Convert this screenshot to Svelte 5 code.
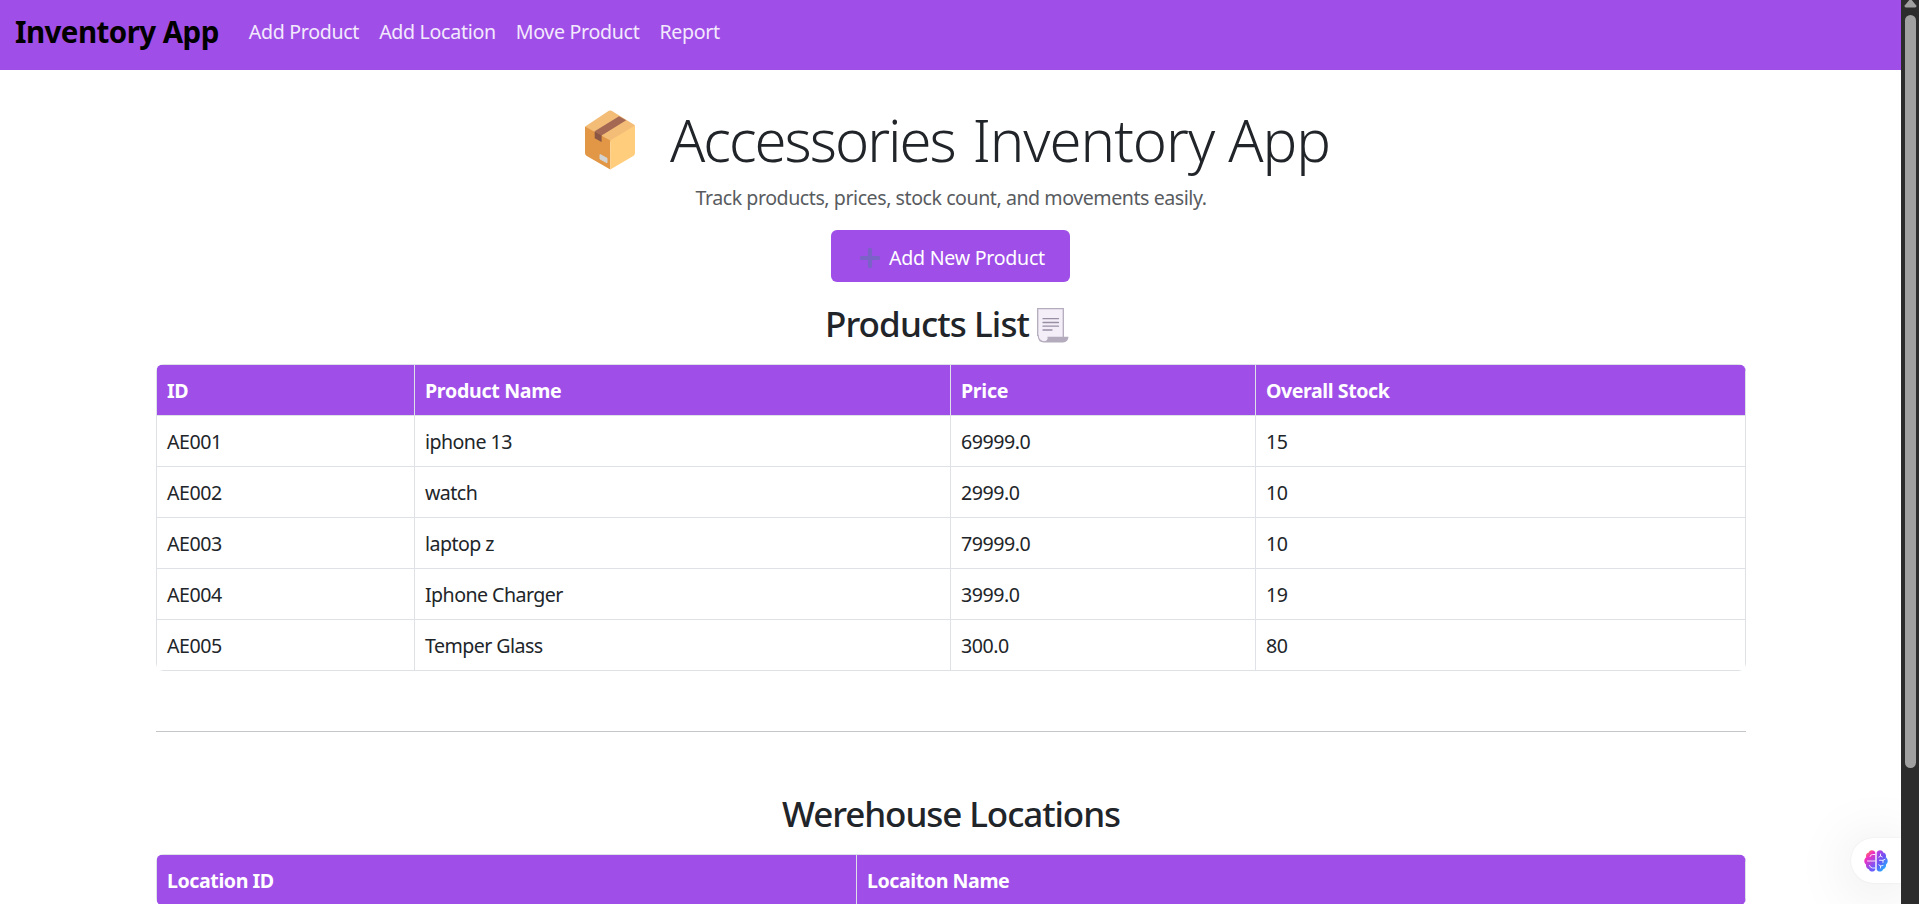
<script>
  const links = ['Add Product', 'Add Location', 'Move Product', 'Report'];
  const products = [
    { id: 'AE001', name: 'iphone 13', price: '69999.0', stock: 15 },
    { id: 'AE002', name: 'watch', price: '2999.0', stock: 10 },
    { id: 'AE003', name: 'laptop z', price: '79999.0', stock: 10 },
    { id: 'AE004', name: 'Iphone Charger', price: '3999.0', stock: 19 },
    { id: 'AE005', name: 'Temper Glass', price: '300.0', stock: 80 }
  ];
</script>

<div class="window">
  <div class="page">
    <nav>
      <span class="brand">Inventory App</span>
      {#each links as link}
        <span class="link">{link}</span>
      {/each}
    </nav>

    <main>
      <h1>
        <svg class="box" viewBox="0 0 50 60" width="50" height="60" aria-hidden="true">
          <path d="M0.6 16.2 23.8 .8Q25.2 0 26.6 .8L49.6 15 50 17.5 25.3 32 0 17.5Z" fill="#f3bd78" />
          <path d="M0 16.5 25.3 30.5V59.5L1.8 46Q0 45 0 43Z" fill="#e29746" />
          <path d="M25.3 30.5 50 15.5V43Q50 45 48.3 46L25.3 59.5Z" fill="#ffcd7c" />
          <path d="M9.7 21.2 34 6.2 41.2 10.3 16.6 25.6Z" fill="#a56953" />
          <path d="M9.7 21.2 16.6 25.2V32L9.7 28.2Z" fill="#8b5644" />
          <path d="M15 44.500 22 48.300V52.800L15 49Z" fill="#d3d3d3" stroke="#d3d3d3" stroke-linejoin="round" />
        </svg>
        <span class="w1">Accessories</span>
        <span class="w2">Inventory App</span>
      </h1>
      <p class="lead">Track products, prices, stock count, and movements easily.</p>
      <button>
        <svg viewBox="0 0 20 20" width="20" height="20" aria-hidden="true">
          <path d="M10 2V18M2 10H18" stroke="#7b62c6" stroke-width="4.2" stroke-linecap="round" />
        </svg>
        <span>Add New Product</span>
      </button>

      <h2 class="first">
        <span class="products">Products List</span>
        <svg viewBox="0 0 32 35" width="32" height="35" aria-hidden="true">
          <path d="M.7.7H26.3V30H10V34.3H6Q.7 33.5 .7 28Z" fill="#f3eef8" />
          <path d="M.7 28V.7H26.3V29" fill="none" stroke="#b4acbc" stroke-width="1.3" />
          <path d="M.6 27Q.8 34.5 7 34.5H26Q31.3 34 31.5 28.8H10.5Q11 33 7.5 33.2 2 33 1.6 27Z" fill="#b4acbc" />
          <path d="M6 10.7H21.5M6 14.5H21.5M6 18.2H21.5M6 22H15" stroke="#998ea4" stroke-width="1.3" stroke-linecap="round" />
        </svg>
      </h2>

      <div class="frame">
        <table>
          <colgroup><col class="c1" /><col class="c2" /><col class="c3" /><col class="c4" /></colgroup>
          <thead>
            <tr><th>ID</th><th>Product Name</th><th>Price</th><th class="tight">Overall Stock</th></tr>
          </thead>
          <tbody>
            {#each products as p}
              <tr><td>{p.id}</td><td class="name">{p.name}</td><td>{p.price}</td><td>{p.stock}</td></tr>
            {/each}
          </tbody>
        </table>
      </div>

      <hr />

      <h2 class="second"><span class="places">Werehouse Locations</span></h2>
      <div class="frame">
        <table>
          <colgroup><col class="l1" /><col class="l2" /></colgroup>
          <thead>
            <tr><th class="tight">Location ID</th><th class="tight">Locaiton Name</th></tr>
          </thead>
        </table>
      </div>
    </main>

    <div class="assistant">
      <svg viewBox="0 0 24 22" width="24" height="22" aria-hidden="true">
        <defs>
          <linearGradient id="left" x1="0" y1="0" x2=".5" y2="1">
            <stop offset="0" stop-color="#ffa51f" /><stop offset=".4" stop-color="#f22fc0" /><stop offset="1" stop-color="#6b5cff" />
          </linearGradient>
          <linearGradient id="right" x1="0" y1="0" x2=".6" y2="1">
            <stop offset="0" stop-color="#c53be0" /><stop offset=".55" stop-color="#6457f5" /><stop offset="1" stop-color="#22b5ff" />
          </linearGradient>
        </defs>
        <path d="M11.3 2.5C10-.6 5.500-.3 4.800 2.500 2.200 3 1.600 5.300 2.200 7.300-.3 9-.3 12.800 2 14.500 1.600 17 3 18.800 4.800 19.200 5.800 22.300 10.300 22.400 11.300 19.500Z" fill="url(#left)" />
        <path d="M12.7 2.5C14-.6 18.500-.3 19.200 2.500 21.800 3 22.400 5.300 21.800 7.300 24.300 9 24.300 12.800 22 14.500 22.400 17 21 18.800 19.200 19.200 18.200 22.300 13.700 22.400 12.700 19.500Z" fill="url(#right)" />
        <path d="M11 4.500H8.500Q6.500 4.500 6 6.500M3.500 11H11M5.500 15.500Q6.500 18 8.500 18H11M16.500 4V6L14.800 7.200M16.500 6L18.200 7M15.500 10.300H19L21 9.300M19 10.300V12.500M14.800 14.800L16.500 16L19 15.500M16.500 16V18" fill="none" stroke="#fff" stroke-opacity=".85" stroke-width="1" stroke-linecap="round" />
      </svg>
    </div>
  </div>

  <div class="scrollbar">
    <svg viewBox="0 0 13 8" width="13" height="8" aria-hidden="true"><path d="M5.300 0H7.700L12.300 5.500Q13 7.500 11 7.500H2Q0 7.500.7 5.500Z" fill="#a0a0a0" /></svg>
    <div class="thumb"></div>
  </div>
</div>

<style>
  :global(body) { margin: 0; overflow: hidden; }
  .window {
    display: flex;
    height: 904px;
    overflow: hidden;
    background: #fff;
    color: #212529;
    font: 400 19.6px/30px "Noto Sans", "Open Sans", sans-serif;
    letter-spacing: -0.45px;
  }
  .page { position: relative; flex: 1; height: 904px; overflow: hidden; }
  nav {
    display: flex;
    align-items: center;
    gap: 20px;
    box-sizing: border-box;
    height: 70px;
    padding: 0 15px 7px;
    background: #a04ee8;
  }
  .brand { margin-right: 10px; color: #000; font-size: 29.5px; font-weight: 700; letter-spacing: -0.55px; white-space: nowrap; }
  .link { color: #f3e9fd; letter-spacing: -0.31px; }
  main { display: flex; flex-direction: column; align-items: center; padding: 34px 155px 0 156px; }
  h1 { display: flex; align-items: center; height: 72px; margin: 0; font-size: 58px; font-weight: 300; line-height: 72px; white-space: nowrap; }
  .box { margin: 0 35px 0 13px; }
  .w1 { margin-right: 18px; letter-spacing: -2px; }
  .w2 { letter-spacing: -1px; }
  .lead { margin: 7px 0 0; color: #595c5f; }
  button {
    display: flex;
    align-items: center;
    gap: 9px;
    box-sizing: border-box;
    width: 239px;
    height: 52px;
    margin: 17px 1px 0 0;
    padding: 3px 0 0 29px;
    border: 0;
    border-radius: 6px;
    background: #a04ee8;
    color: #fff;
    font: inherit;
    letter-spacing: -0.26px;
  }
  h2 { display: flex; align-items: center; gap: 8px; box-sizing: border-box; height: 42px; margin: 20px 0; padding-top: 2px; font-size: 35px; font-weight: 500; line-height: 42px; white-space: nowrap; }
  h2 svg { margin-top: 2px; }
  .first { padding-right: 8px; }
  .products { letter-spacing: -0.9px; }
  .places { letter-spacing: -1.08px; }
  .second { margin-top: 60px; }
  .frame { width: 1590px; overflow: hidden; border-radius: 8px; }
  table { width: 1590px; table-layout: fixed; border-collapse: separate; border-spacing: 0; border: solid #dee2e6; border-width: 1px 0 0 1px; }
  th, td { height: 30px; padding: 11px 10px 9px; border: solid #dee2e6; border-width: 0 1px 1px 0; text-align: left; }
  th { background: #a04ee8; color: #fff; font-weight: 700; letter-spacing: -0.3px; }
  th.tight { letter-spacing: -0.43px; }
  td.name { letter-spacing: -0.55px; }
  .c1 { width: 258px; }
  .c2 { width: 536px; }
  .c3 { width: 305px; }
  .c4 { width: 490px; }
  .l1 { width: 700px; }
  .l2 { width: 889px; }
  hr { width: 1590px; height: 1px; margin: 60px 0 0; border: 0; background: #c5c6c7; }
  .assistant {
    position: absolute;
    top: 838px;
    right: 0;
    display: flex;
    align-items: center;
    box-sizing: border-box;
    width: 50px;
    height: 45px;
    padding-left: 13px;
    border-radius: 23px 0 0 23px;
    background: #fff;
    box-shadow: 0 6px 60px rgba(0, 0, 0, 0.13), 0 0 2px rgba(0, 0, 0, 0.08);
  }
  .scrollbar { display: flex; flex-direction: column; align-items: center; gap: 7px; width: 18px; background: #2c2c2c; }
  .thumb { width: 11px; height: 753px; border-radius: 6px; background: #a0a0a0; }
</style>
